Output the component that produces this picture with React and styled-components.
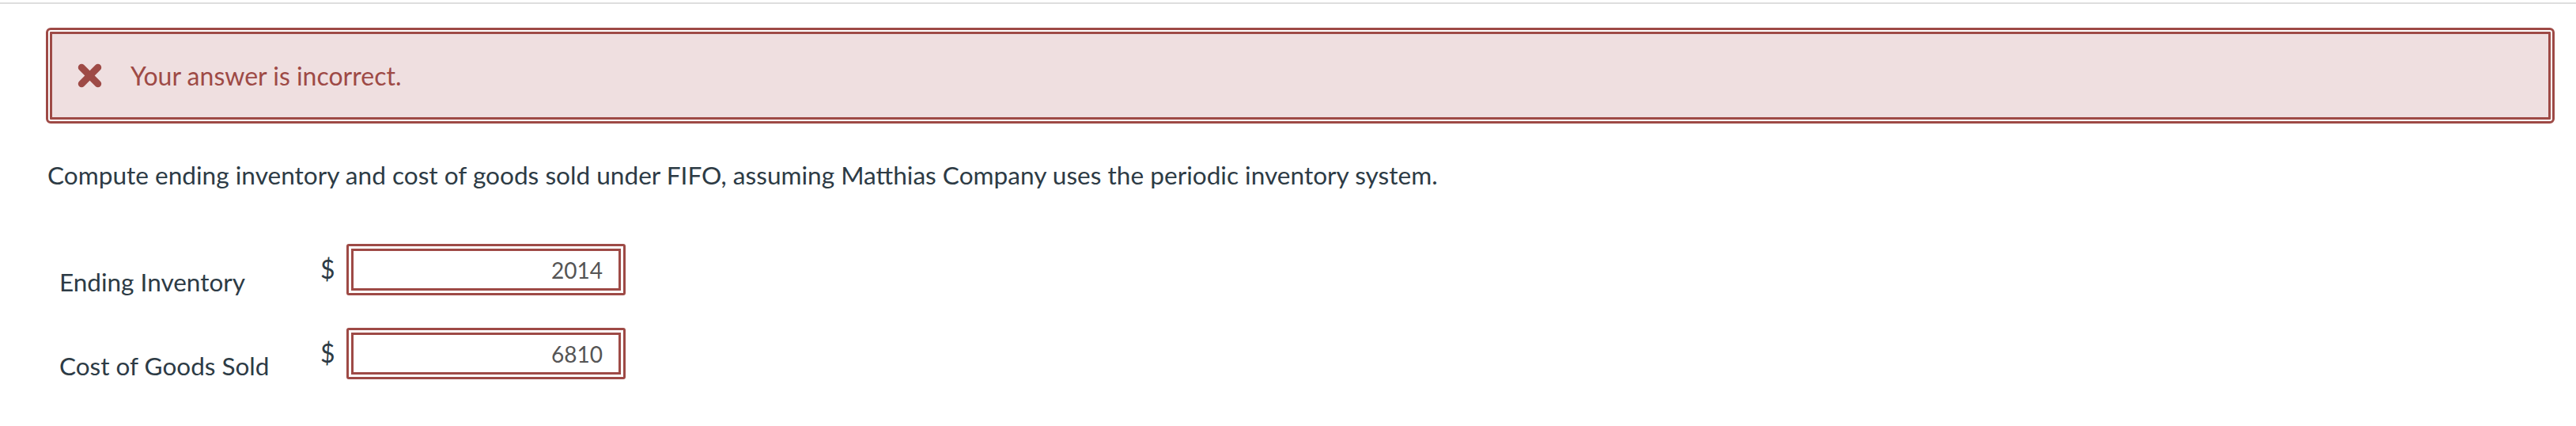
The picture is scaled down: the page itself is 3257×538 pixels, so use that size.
import React from 'react';
import styled, { createGlobalStyle } from 'styled-components';

const GlobalStyle = createGlobalStyle`
  body {
    margin: 0;
    background: #ffffff;
    font-family: Lato, "Open Sans", sans-serif;
    color: #2d3b45;
  }
`;

const TopRule = styled.div`
  height: 2px;
  margin-top: 3px;
  background: #dedede;
`;

const Banner = styled.div`
  display: flex;
  align-items: center;
  gap: 36px;
  height: 105px;
  margin: 30px 27px 0 58px;
  padding-left: 32px;
  border: 8px double #9e4a46;
  border-radius: 6px;
  background: #efdfe0;
  background-clip: padding-box;
  color: #9e4a46;
  font-size: 32px;
`;

const Question = styled.p`
  margin: 45px 0 0 60px;
  font-size: 31.6px;
  line-height: 40px;
`;

const Answers = styled.div`
  display: grid;
  grid-template-columns: 330px 33px 353px;
  row-gap: 41px;
  margin: 67px 0 0 75px;
`;

const Label = styled.div`
  align-self: end;
  font-size: 31.5px;
  line-height: 38px;
  margin-bottom: -2px;
`;

const Dollar = styled.div`
  align-self: start;
  font-size: 32px;
  line-height: 38px;
  margin-top: 13px;
`;

const Field = styled.div`
  box-sizing: border-box;
  height: 65px;
  padding-right: 20px;
  border: 9px double #9e4a46;
  border-radius: 3px;
  display: flex;
  align-items: center;
  justify-content: flex-end;
  color: #555555;
  font-size: 28px;
`;

const CrossIcon = () => (
  <svg width="31" height="31" viewBox="0 0 30 30">
    <g stroke="#9e4a46" strokeWidth="8.5" strokeLinecap="round">
      <line x1="5" y1="5" x2="25" y2="25" />
      <line x1="25" y1="5" x2="5" y2="25" />
    </g>
  </svg>
);

const rows = [
  { label: 'Ending Inventory', value: '2014' },
  { label: 'Cost of Goods Sold', value: '6810' },
];

export default function App() {
  return (
    <>
      <GlobalStyle />
      <TopRule />
      <Banner>
        <CrossIcon />
        <span>Your answer is incorrect.</span>
      </Banner>
      <Question>
        Compute ending inventory and cost of goods sold under FIFO, assuming Matthias Company uses the periodic inventory system.
      </Question>
      <Answers>
        {rows.map(row => (
          <React.Fragment key={row.label}>
            <Label>{row.label}</Label>
            <Dollar>$</Dollar>
            <Field>{row.value}</Field>
          </React.Fragment>
        ))}
      </Answers>
    </>
  );
}
